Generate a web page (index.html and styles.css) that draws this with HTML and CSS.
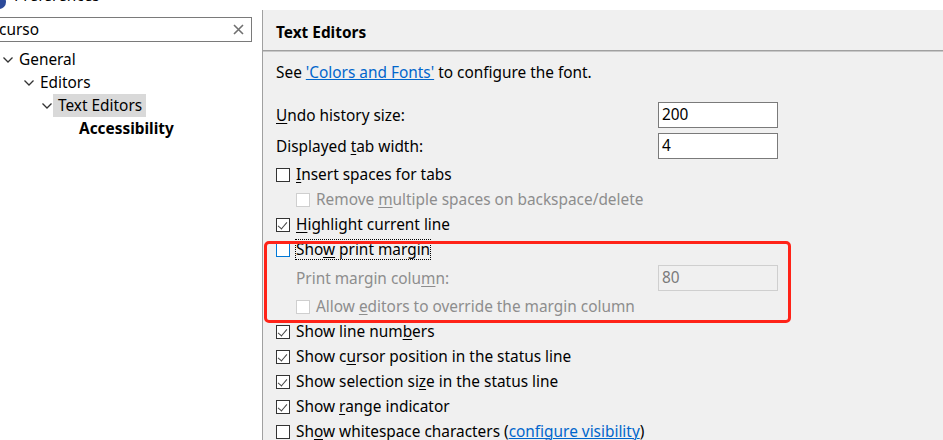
FILE: index.html
```html
<!DOCTYPE html>
<html>
<head>
	<meta charset="utf-8">
	<title>Preferences</title>
	<link rel="stylesheet" href="styles.css">
</head>
<body>
	<div class="titlebar">
		<span class="app_icon"></span>
		<span class="title_text">Preferences</span>
	</div>

	<div class="main">
		<div class="sidebar">
			<div class="search">
				<span class="search_text">curso</span>
				<svg class="clear" width="11" height="11" viewBox="0 0 11 11"><path d="M1 1 L10 10 M10 1 L1 10" stroke="#707070" stroke-width="1.6"/></svg>
			</div>
			<ul class="tree">
				<li class="node level0"><svg class="chev" width="10" height="6" viewBox="0 0 10 6"><path d="M0.5 0.5 L5 5 L9.5 0.5" fill="none" stroke="#333" stroke-width="1.3"/></svg>General</li>
				<li class="node level1"><svg class="chev" width="10" height="6" viewBox="0 0 10 6"><path d="M0.5 0.5 L5 5 L9.5 0.5" fill="none" stroke="#333" stroke-width="1.3"/></svg>Editors</li>
				<li class="node level2"><svg class="chev" width="10" height="6" viewBox="0 0 10 6"><path d="M0.5 0.5 L5 5 L9.5 0.5" fill="none" stroke="#333" stroke-width="1.3"/></svg><span class="selected">Text Editors</span></li>
				<li class="node level3 match">Accessibility</li>
			</ul>
		</div>

		<div class="content">
			<div class="page_header">Text Editors</div>
			<div class="page_body">
				<p class="intro">See <a href="#">'Colors and Fonts'</a> to configure the font.</p>

				<div class="field">
					<label><u>U</u>ndo history size:</label>
					<div class="input">200</div>
				</div>
				<div class="field">
					<label>Displayed <u>t</u>ab width:</label>
					<div class="input">4</div>
				</div>

				<div class="check"><span class="box"></span><span><u>I</u>nsert spaces for tabs</span></div>
				<div class="check sub disabled"><span class="box"></span><span>Remove <u>m</u>ultiple spaces on backspace/delete</span></div>
				<div class="check on"><span class="box"></span><span><u>H</u>ighlight current line</span></div>

				<div class="group">
					<div class="check focus"><span class="box"></span><span class="focus_label">Sho<u>w</u> print margin</span></div>
					<div class="field sub_field disabled">
						<label>Print margin colu<u>m</u>n:</label>
						<div class="input">80</div>
					</div>
					<div class="check sub disabled"><span class="box"></span><span>Allow <u>e</u>ditors to override the margin column</span></div>
					<div class="highlight"></div>
				</div>

				<div class="check on"><span class="box"></span><span>Show line num<u>b</u>ers</span></div>
				<div class="check on"><span class="box"></span><span>Show c<u>u</u>rsor position in the status line</span></div>
				<div class="check on"><span class="box"></span><span>Show selection si<u>z</u>e in the status line</span></div>
				<div class="check on"><span class="box"></span><span>Show <u>r</u>ange indicator</span></div>
				<div class="check"><span class="box"></span><span>Sh<u>o</u>w whitespace characters (<a href="#">configure visibility</a>)</span></div>
			</div>
		</div>
	</div>
</body>
</html>
```

FILE: styles.css
```css
body {
	margin: 0;
	background-color: #fff;
	font-family: "Noto Sans", "Open Sans", sans-serif;
	font-size: 15.4px;
	color: #000;
	overflow: hidden;
}

u {
	text-decoration-thickness: 1px;
	text-underline-offset: 2px;
}

a {
	color: #0066cc;
	text-decoration: underline;
	text-decoration-thickness: 1px;
}

.titlebar {
	height: 10px;
	overflow: hidden;
	display: flex;
	align-items: flex-end;
}

.app_icon {
	width: 14px;
	height: 14px;
	margin-left: -8px;
	margin-bottom: 1px;
	border-radius: 50%;
	background-color: #2c4a9a;
	flex-shrink: 0;
}

.title_text {
	margin-left: 8px;
	line-height: 20px;
	margin-bottom: 4px;
}

.main {
	display: flex;
	height: 430px;
}

.sidebar {
	width: 262px;
	border-right: 1px solid #a0a0a0;
	background-color: #fff;
	flex-shrink: 0;
}

.search {
	margin-top: 7px;
	margin-left: -6px;
	width: 258px;
	height: 25px;
	box-sizing: border-box;
	border: 1px solid #7a7a7a;
	display: flex;
	align-items: center;
	justify-content: space-between;
	padding: 0 7px 0 4px;
}

.search_text {
	line-height: 20px;
}

.tree {
	list-style: none;
	margin: 6px 0 0 0;
	padding: 0;
}

.node {
	height: 23px;
	line-height: 23px;
	display: flex;
	align-items: center;
	white-space: nowrap;
}

.chev {
	margin-right: 6px;
	flex-shrink: 0;
}

.level0 { padding-left: 3px; }
.level1 { padding-left: 24px; }
.level2 { padding-left: 42px; }
.level3 { padding-left: 79px; }

.selected {
	background-color: #d9d9d9;
	padding: 0 4px 0 5px;
	margin-left: -5px;
}

.match {
	font-weight: bold;
}

.content {
	flex: 1;
	background-color: #f0f0f0;
}

.page_header {
	height: 41px;
	box-sizing: border-box;
	padding: 13px 0 0 13px;
	line-height: 20px;
	font-weight: bold;
	border-bottom: 1px solid #a0a0a0;
	box-shadow: 0 1px 0 #c8c8c8;
}

.page_body {
	padding-left: 13px;
}

.intro {
	margin: 12px 0 0 0;
	line-height: 20px;
}

.field {
	display: grid;
	grid-template-columns: 382px 120px;
	align-items: center;
	height: 26px;
}

.intro + .field {
	margin-top: 19px;
}

.field + .field {
	margin-top: 5px;
}

.input {
	height: 26px;
	box-sizing: border-box;
	border: 1px solid #7a7a7a;
	background-color: #fff;
	padding-left: 3px;
	line-height: 24px;
}

.check {
	height: 25px;
	display: flex;
	align-items: center;
	white-space: nowrap;
}

.field + .check {
	margin-top: 3px;
}

.box {
	width: 14px;
	height: 14px;
	box-sizing: border-box;
	border: 1px solid #333;
	background-color: #fff;
	margin-right: 6px;
	flex-shrink: 0;
	position: relative;
}

.check.on .box::after {
	content: "";
	position: absolute;
	left: 3px;
	top: 1px;
	width: 4px;
	height: 8px;
	border-right: 1.3px solid #444;
	border-bottom: 1.3px solid #444;
	transform: rotate(40deg);
}

.sub {
	padding-left: 20px;
}

.disabled {
	color: #8d8d8d;
}

.disabled .box {
	border-color: #cfcfcf;
}

.disabled .input {
	border-color: #cfcfcf;
	background-color: #f0f0f0;
	color: #7a7a7a;
}

.sub_field {
	margin-top: 3px;
}

.sub_field label {
	padding-left: 20px;
}

.focus .box {
	border-color: #0078d7;
}

.focus_label {
	outline: 1px dotted #000;
	outline-offset: -1px;
	padding: 0 1px;
	margin-left: -1px;
	line-height: 21px;
}

.group {
	position: relative;
}

.highlight {
	position: absolute;
	left: -12px;
	top: 4px;
	width: 527px;
	height: 82px;
	box-sizing: border-box;
	border: 3px solid #ff2318;
	border-radius: 5px;
}
```
